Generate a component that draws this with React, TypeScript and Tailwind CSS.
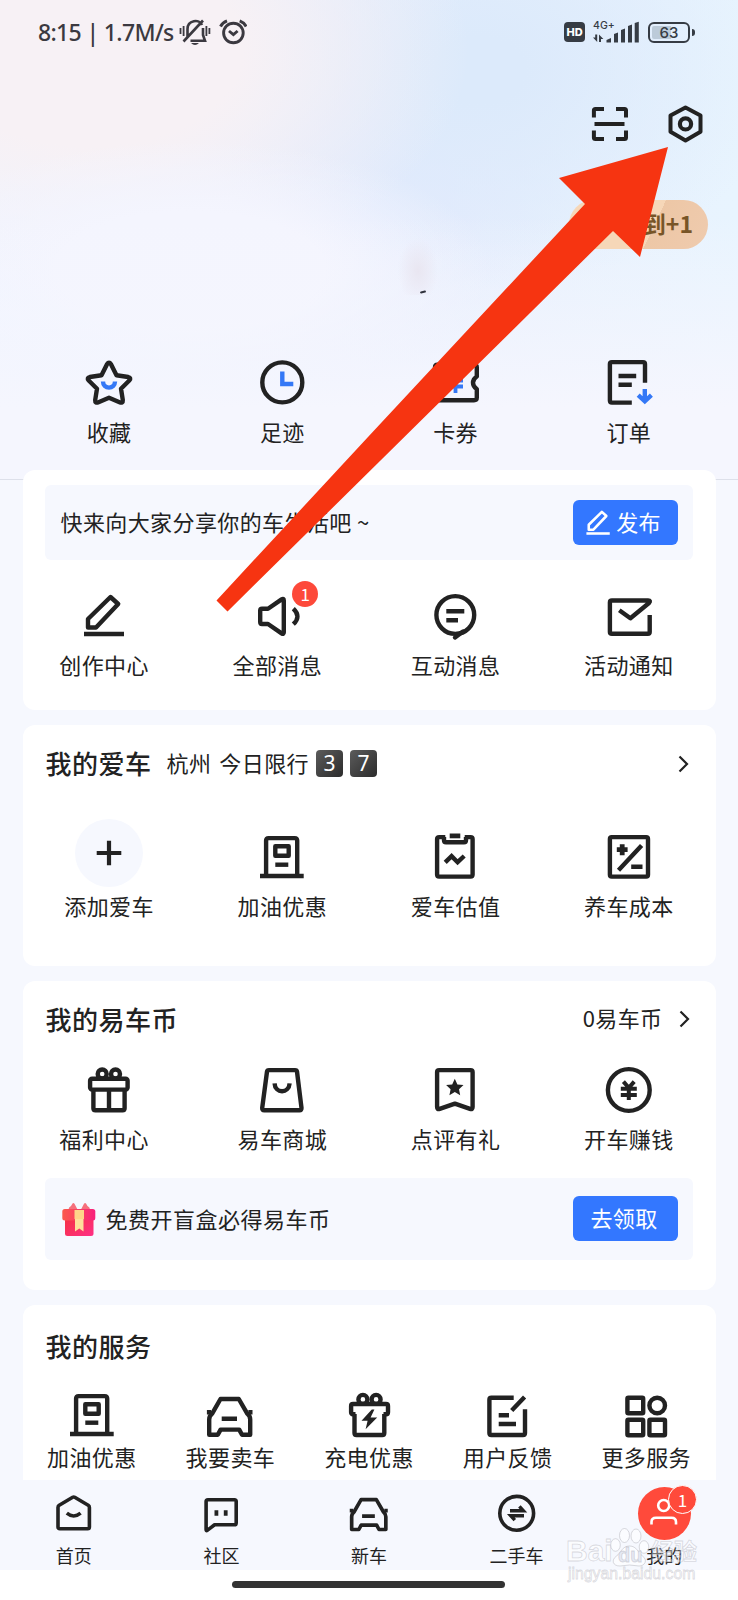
import type { ReactNode } from "react"
import clsx from "clsx"

type IconProps = { size?: number; className?: string }

function Svg({ size = 48, box = 48, sw = 4.4, className, children }: IconProps & { box?: number; sw?: number; children: ReactNode }) {
  return (
    <svg
      width={size}
      height={size}
      viewBox={`0 0 ${box} ${box}`}
      fill="none"
      stroke="currentColor"
      strokeWidth={sw}
      strokeLinejoin="round"
      className={clsx("shrink-0 overflow-visible", className)}
    >
      {children}
    </svg>
  )
}

const BLUE = "#3478f6"

const StarIcon = () => (
  <Svg>
    <path d="M16.5 16.3 22 5.2Q24 2.2 26 5.2L31.5 16.3 43.2 18Q46.6 19 44.3 21.5L36 29.7 37.8 41Q38 44.7 34.5 43.2L24 38.8 13.5 43.2Q10 44.7 10.2 41L12 29.7 3.7 21.5Q1.4 19 4.8 18Z" />
    <path d="M18 22.6a6 6 0 0 0 12 0" stroke={BLUE} />
  </Svg>
)

const ClockIcon = () => (
  <Svg>
    <circle cx="24.3" cy="23.4" r="20" />
    <path d="M24.3 12.5V25H35.3" stroke={BLUE} strokeLinejoin="miter" />
  </Svg>
)

const TicketIcon = () => (
  <Svg>
    <path d="M6.5 5.8H43Q45.8 5.8 45.8 8.5V17.5Q42 20 42 23.8T45.8 30V38.5Q45.8 41.2 43 41.2H6.5Q4 41.2 4 38.5V30Q7.8 27.5 7.8 23.8T4 17.5V8.5Q4 5.8 6.5 5.8Z" />
    <path d="M18 13 24.5 20 31 13M17 21.5H32M17 27.5H32M24.5 20V34" stroke={BLUE} strokeWidth="3.8" strokeLinejoin="miter" />
  </Svg>
)

const OrderIcon = () => (
  <Svg>
    <path d="M40 23.7V5.1Q40 3.1 38 3.1H6.9Q4.9 3.1 4.9 5.1V41.6Q4.9 43.6 6.9 43.6H26.8" />
    <path d="M13.5 17H31.2M13.5 25.7H26.8" />
    <path d="M39.8 30V42M33.2 36.2 39.8 42.3 46.4 36.2" stroke={BLUE} strokeLinejoin="miter" />
  </Svg>
)

const PencilIcon = ({ size, className }: IconProps) => (
  <Svg size={size} className={className}>
    <path d="M25.5 5 33.2 12 11 35.5H3V27Z" />
    <path d="M-1 42H39" />
  </Svg>
)

const SpeakerIcon = () => (
  <Svg>
    <path d="M4 16.8H10L23.6 7.4Q25.8 6 25.8 8.6V40.2Q25.8 42.8 23.6 41.4L10 32H4Q2.2 32 2.2 30V18.8Q2.2 16.8 4 16.8Z" />
    <path d="M35.3 16.6Q43.6 24.4 35.3 32.2" />
  </Svg>
)

const ChatIcon = () => (
  <Svg>
    <circle cx="24.3" cy="23" r="18.9" />
    <path d="M32 39.5 24 45.4" strokeLinecap="round" />
    <path d="M15.3 19.2H33.3M15.3 28.2H27" />
  </Svg>
)

const MailIcon = () => (
  <Svg>
    <path d="M44.7 23V40Q44.7 41.8 42.9 41.8H6.9Q4.9 41.8 4.9 39.9V10.4Q4.9 8.5 6.9 8.5H43Q46.2 8.6 44 11L25.4 26.3 14.3 18.2" />
  </Svg>
)

const PumpIcon = () => (
  <Svg>
    <path d="M2 43H45.7M8.1 43V7.6Q8.1 5.1 10.6 5.1H36.7Q39.2 5.1 39.2 7.6V43" />
    <rect x="17.3" y="13.3" width="13.4" height="9.4" />
    <path d="M17.3 31.7H30.3" />
  </Svg>
)

const ClipboardIcon = () => (
  <Svg>
    <path d="M14.3 4.1H8.1Q6.1 4.1 6.1 6.1V41.6Q6.1 43.6 8.1 43.6H39.6Q41.6 43.6 41.6 41.6V6.1Q41.6 4.1 39.6 4.1H33.7" />
    <path d="M13 4V7.2Q13 9.2 15 9.2H33Q35 9.2 35 7.2V4" />
    <path d="M18.7 2.9H29.3" strokeWidth="4.8" />
    <path d="M14.2 29.4 20.6 23.2 26.6 29.2 33.2 23" strokeLinejoin="miter" />
  </Svg>
)

const CostIcon = () => (
  <Svg>
    <rect x="4.9" y="4.1" width="38.1" height="39.5" rx="1.8" />
    <path d="M11.8 16.7H22.6M17.2 11.2V22.2" strokeWidth="4.8" />
    <path d="M13.5 37.2 36.6 12.6M26.2 33.7H37.5" />
  </Svg>
)

const GiftIcon = () => (
  <Svg>
    <rect x="5.1" y="12.8" width="37.5" height="10.8" rx="2" />
    <path d="M8.4 24V42.2Q8.4 44.2 10.4 44.2H37.6Q39.6 44.2 39.6 42.2V24M24 24V44" />
    <circle cx="17.2" cy="8" r="4.5" />
    <circle cx="30.5" cy="8" r="4.5" />
  </Svg>
)

const BagIcon = () => (
  <Svg>
    <path d="M11 4.1H37Q38.8 4.1 39 5.6L43.5 42Q43.7 44.2 41.5 44.2H6.2Q4 44.2 4.2 42L9 5.6Q9.2 4.1 11 4.1Z" />
    <path d="M16.6 17.3C17 27.8 31 27.8 31.6 17.3" />
  </Svg>
)

const BookmarkIcon = () => (
  <Svg>
    <path d="M8.1 4.1H39.6Q41.6 4.1 41.6 6.1V41Q41.6 43.8 39 42.9L23.9 37.6 8.7 42.9Q6.1 43.8 6.1 41V6.1Q6.1 4.1 8.1 4.1Z" />
    <path d="M23.8 12.8 26.4 18.4 32.5 19 28 23.2 29.2 29.2 23.8 26.1 18.4 29.2 19.6 23.2 15.1 19 21.2 18.4Z" fill="currentColor" stroke="none" />
  </Svg>
)

const YenIcon = () => (
  <Svg>
    <circle cx="23.8" cy="24" r="20.9" />
    <path d="M18.4 15.6 23.8 21.8 29.2 15.6M15.8 22.7H31.8M15.8 29H31.8M23.8 22V34" strokeWidth="4" strokeLinejoin="miter" />
  </Svg>
)

const CarIcon = ({ size }: IconProps) => (
  <Svg size={size}>
    <path d="M14.5 8H32.8L41.4 22.8Q44.2 25 44.2 28.5V43.8H36L33.2 38.6H14.6L11.8 43.8H3.2V28.5Q3.2 25 6 22.8Z" />
    <path d="M.9 21.2H5M42.4 21.2H46.5M15.7 27.7H31" />
  </Svg>
)

const ChargeIcon = () => (
  <Svg>
    <path d="M10.5 23.3H8Q6.1 23.3 6.1 21.3V15Q6.1 13 8 13H41Q43 13 43 15V21.3Q43 23.3 41 23.3H38.5" />
    <path d="M9.5 23V42Q9.5 44 11.5 44H37.3Q39.3 44 39.3 42V23" />
    <circle cx="17.9" cy="8.4" r="4.5" />
    <circle cx="31.1" cy="8.4" r="4.5" />
    <path d="M26.8 18.5 16.5 29.8H22.6L20.6 38.2 32.2 26.4H25.6L29.4 18.5Z" fill="currentColor" stroke="none" />
  </Svg>
)

const FeedbackIcon = () => (
  <Svg>
    <path d="M30.7 6.8H8.4Q6.4 6.8 6.4 8.8V42Q6.4 44 8.4 44H40Q42 44 42 42V18.3M28.7 19.6 41.6 6" />
    <path d="M15.7 24.3H26M15.7 33H33" />
  </Svg>
)

const MoreIcon = () => (
  <Svg>
    <rect x="5.4" y="6.8" width="15.8" height="15.4" rx="1" />
    <circle cx="35.2" cy="14.5" r="7.8" />
    <rect x="5.4" y="28.8" width="15.8" height="15.4" rx="1" />
    <rect x="27.4" y="28.8" width="15.6" height="15.4" rx="1" />
  </Svg>
)

const HomeTab = () => (
  <Svg size={40} box={40} sw={3.6}>
    <path d="M18.7 4.3Q19.7 3.7 20.7 4.3L34.2 12.2Q35.4 13 35.4 14.4V34Q35.4 35.8 33.6 35.8H5.8Q4 35.8 4 34V14.4Q4 13 5.2 12.2Z" />
    <path d="M12.8 20.2Q19.7 25.8 26.6 20.2" />
  </Svg>
)

const CommunityTab = () => (
  <Svg size={40} box={40} sw={3.6}>
    <path d="M7 6.8H33.4Q35.2 6.8 35.2 8.6V30Q35.2 31.8 33.4 31.8H13.6L6.2 37.4Q5.1 38 5.1 36.6V8.6Q5.1 6.8 7 6.8Z" />
    <path d="M15.4 17.2V22.8M24.7 17.2V22.8" strokeWidth="3.8" />
  </Svg>
)

const UsedCarTab = () => (
  <Svg size={40} box={40} sw={3.6}>
    <circle cx="19.7" cy="20.3" r="16.9" />
    <path d="M13 17.8H26.4L22.4 13.4M27 22.8H13.8L17.8 27.2" strokeWidth="3.4" strokeLinejoin="miter" />
  </Svg>
)

const PresentIcon = () => (
  <svg width="34" height="36" viewBox="0 0 34 36" className="shrink-0">
    <defs>
      <linearGradient id="lid" x1="0" x2="1">
        <stop offset="0" stopColor="#fb5a4c" />
        <stop offset="1" stopColor="#f8207c" />
      </linearGradient>
      <linearGradient id="box" x1="0" x2="1" y1="0" y2="1">
        <stop offset="0" stopColor="#f4323f" />
        <stop offset="1" stopColor="#ff2f86" />
      </linearGradient>
    </defs>
    <path d="M6.5 8.5Q6.5 6 9 5L10.5 2.5Q11.5 1.5 12.5 2.8L15.5 8.5ZM19 8.5 22 2.8Q23 1.5 24 2.5L25.5 5Q28 6 28 8.5Z" fill="#f5707c" />
    <rect x="3" y="15" width="28.5" height="20" rx="2.5" fill="url(#box)" />
    <rect x=".3" y="8" width="33" height="11.5" rx="2.5" fill="url(#lid)" />
    <path d="M12.5 9H22V18H12.5Z" fill="#ffd489" />
    <path d="M13 18H21.5V30.5L17.3 27.5 13 30.5Z" fill="#ffdf9c" />
  </svg>
)

const Chevron = () => (
  <svg width="11" height="18" viewBox="0 0 11 18" fill="none" stroke="#222" strokeWidth="2.2" className="shrink-0">
    <path d="M1.5 1.5 9 9 1.5 16.5" />
  </svg>
)

type Item = { icon: ReactNode; label: string; shift?: boolean; badge?: boolean }

const quick: Item[] = [
  { icon: <StarIcon />, label: "收藏" },
  { icon: <ClockIcon />, label: "足迹" },
  { icon: <TicketIcon />, label: "卡券" },
  { icon: <OrderIcon />, label: "订单" },
]

const messages: Item[] = [
  { icon: <PencilIcon />, label: "创作中心", shift: true },
  { icon: <SpeakerIcon />, label: "全部消息", shift: true, badge: true },
  { icon: <ChatIcon />, label: "互动消息" },
  { icon: <MailIcon />, label: "活动通知" },
]

const garage: Item[] = [
  {
    icon: (
      <div className="-mt-[14px] -mb-[6px] flex size-[68px] items-center justify-center rounded-full bg-[#f6f8fe]">
        <Svg size={26} box={26} sw={4.2}>
          <path d="M.7 13H25.3M13 .7V25.3" />
        </Svg>
      </div>
    ),
    label: "添加爱车",
  },
  { icon: <PumpIcon />, label: "加油优惠" },
  { icon: <ClipboardIcon />, label: "爱车估值" },
  { icon: <CostIcon />, label: "养车成本" },
]

const coins: Item[] = [
  { icon: <GiftIcon />, label: "福利中心", shift: true },
  { icon: <BagIcon />, label: "易车商城" },
  { icon: <BookmarkIcon />, label: "点评有礼" },
  { icon: <YenIcon />, label: "开车赚钱" },
]

const services: Item[] = [
  { icon: <PumpIcon />, label: "加油优惠" },
  { icon: <CarIcon />, label: "我要卖车" },
  { icon: <ChargeIcon />, label: "充电优惠" },
  { icon: <FeedbackIcon />, label: "用户反馈" },
  { icon: <MoreIcon />, label: "更多服务" },
]

const tabs: Item[] = [
  { icon: <HomeTab />, label: "首页" },
  { icon: <CommunityTab />, label: "社区" },
  { icon: <CarIcon size={40} />, label: "新车" },
  { icon: <UsedCarTab />, label: "二手车" },
]

function IconGrid({ items, className }: { items: Item[]; className?: string }) {
  return (
    <div className={clsx("grid", items.length === 5 ? "grid-cols-5" : "grid-cols-4", className)}>
      {items.map((item) => (
        <div key={item.label} className="flex flex-col items-center">
          <div className="relative mr-[0.5px] flex h-12 items-start justify-center">
            {item.icon}
            {item.badge && (
              <span className="absolute top-[-11px] left-[34px] flex size-[26px] items-center justify-center rounded-full bg-[#fd493a] pb-px text-[17px] leading-none text-white">
                1
              </span>
            )}
          </div>
          <span
            className={clsx(
              "text-[22px] leading-[30px] tracking-[0.4px]",
              items.length === 5 ? "mt-[2px]" : "mt-[9px]",
              item.shift && "mr-[10px]",
            )}
          >
            {item.label}
          </span>
        </div>
      ))}
    </div>
  )
}

function StatusBar() {
  return (
    <div className="flex h-16 items-center pr-[43.5px] pl-[38px] text-[#3b3940]">
      <span className="w-[140px] whitespace-nowrap font-['Noto_Sans'] text-[23px] leading-[30px] font-medium tracking-[-0.65px]">8:15 | 1.7M/s</span>
      <svg width="34" height="28" viewBox="0 0 34 28" fill="none" stroke="currentColor" strokeWidth="2.6">
        <path d="M2.5 10V16M5.6 8V18M28.4 8V18M31.4 10V16" strokeWidth="1.8" />
        <path d="M9.5 18.5V11C9.5 2 21.5 .5 24 7M25 10V17L27 22.8H12.5M25 2.5 5.5 23.5" />
        <path d="M13 25H21Q17 29 13 25Z" fill="currentColor" stroke="none" />
      </svg>
      <svg width="28" height="28" viewBox="0 0 28 28" fill="none" stroke="currentColor" strokeWidth="2.9" className="ml-[7px]">
        <circle cx="14.4" cy="15" r="9.8" />
        <path d="M1.5 8.5Q3.5 4.5 8 2.8M27.2 8.5Q25.2 4.5 20.7 2.8M10 13 14.4 16.6 18.6 13" />
      </svg>
      <div className="ml-auto flex items-center text-[#363c44]">
        <span className="flex h-5 w-[21px] items-center justify-center rounded bg-[#363c44] font-[Inter] text-[11px] font-extrabold text-white">HD</span>
        <div className="relative ml-2 h-6 w-[46px]">
          <span className="absolute top-px left-0 font-[Inter] text-[10.5px] leading-none font-medium">4G+</span>
          <svg width="46" height="24" viewBox="0 0 46 24" fill="currentColor">
            <path d="M13.5 22.5V20L18 18V22.5ZM21 22.5V14L25 12.5V22.5ZM28 22.5V10L32 8.5V22.5ZM35 22.5V6L39 4.5V22.5ZM41.7 22.5V3L45.8 1.8V22.5Z" />
            <path d="M4.2 14.5V22L0 17.5H2.2V14.5ZM6 22V14.5L10.4 19H8V22Z" />
          </svg>
        </div>
        <div className="ml-[9px] flex h-[21px] w-[42px] items-center justify-center rounded-md border-[2.4px] border-current bg-[linear-gradient(90deg,#bccbd9_55%,transparent_55%)] bg-clip-content p-[2px] font-[Inter] text-[15px] leading-none font-medium">
          63
        </div>
        <span className="ml-[2px] h-[7px] w-[2.5px] rounded-r-sm bg-[#363c44]" />
      </div>
    </div>
  )
}

function Watermark() {
  return (
    <div className="pointer-events-none absolute top-[1528px] left-[565px] h-[58px] w-[136px] font-['Liberation_Sans'] font-bold text-white/60 [-webkit-text-stroke:0.8px_rgba(165,165,175,0.4)]">
      <span className="absolute top-[8px] left-[1px] text-[30px] leading-[30px]">Bai</span>
      <svg width="46" height="46" viewBox="0 0 46 46" fill="#fff" fillOpacity=".6" stroke="#b4b4bc" strokeOpacity=".5" className="absolute -top-1 left-[43px]">
        <ellipse cx="7.5" cy="21" rx="4.8" ry="6.3" />
        <ellipse cx="16.5" cy="11.5" rx="5" ry="7" />
        <ellipse cx="28" cy="12" rx="5" ry="7" />
        <ellipse cx="36" cy="23" rx="4.8" ry="6.3" />
        <path d="M21.5 22C29 22 30 29 34.5 32C40 36 37 42 31 42Q21.5 40 12 42C4.5 42 3 36 8.5 32C13 29 14 22 21.5 22Z" />
      </svg>
      <span className="absolute top-[16px] left-[53px] text-[20px] leading-[22px] text-[#e6e9f3]">du</span>
      <span className="absolute top-[8px] left-[86px] font-['Noto_Sans_CJK_SC'] text-[23px] leading-[28px] text-white/40">经验</span>
      <span className="absolute top-[37px] left-[3px] text-[15.8px] leading-[18px] font-normal">jingyan.baidu.com</span>
    </div>
  )
}

export default function App() {
  return (
    <div className="relative flex h-[1600px] w-[738px] flex-col overflow-hidden bg-[#f6f8fe] font-['Noto_Sans_CJK_SC',sans-serif] text-[#222]">
      <div className="absolute inset-x-0 top-0 h-[480px] border-b border-[#dde0ea] bg-[linear-gradient(180deg,transparent_45%,#f5f6fe_85%),radial-gradient(ellipse_300px_130px_at_190px_270px,#f4f5fe_45%,transparent),radial-gradient(ellipse_380px_240px_at_90px_50px,#f7f1f5_40%,transparent),radial-gradient(ellipse_300px_220px_at_480px_70px,#dceafb_15%,transparent),radial-gradient(ellipse_170px_200px_at_400px_170px,#e4eafd,transparent),linear-gradient(90deg,#eef4ff,#e6edfd_45%,#e8f4fe)]" />

      <div className="relative flex h-[470px] flex-col">
        <StatusBar />
        <div className="mt-[36px] flex items-center justify-end gap-[34px] pr-[33px]">
          <Svg sw={4} className="-mr-[6px]">
            <path d="M8.9 17.5V10.5Q8.9 8.9 10.5 8.9H19M31 8.9H39.5Q41 8.9 41 10.5V17.5M8.9 30.5V37.5Q8.9 39.1 10.5 39.1H19M31 39.1H39.5Q41 39.1 41 37.5V30.5M9.5 24H39.5" />
          </Svg>
          <Svg sw={4} className="-mr-1">
            <path d="M24.5 7.4 39.5 15.5V31.8L24.5 40.4 9.5 31.8V15.5Z" />
            <circle cx="24.5" cy="23.9" r="5.6" strokeWidth="4.2" />
          </Svg>
        </div>
        <div className="mt-[52px] mr-[30px] ml-auto flex h-[49px] w-[139px] items-center justify-end rounded-full bg-[linear-gradient(115deg,#f6d7b8_60%,#edc7a6_60%,#efcbae)] pr-[15px] pb-[2px] text-[23px] font-bold text-[#785527]">
          签到+1
        </div>
        <div className="absolute top-[235px] left-[396px] h-[60px] w-[44px] bg-[radial-gradient(ellipse_at_50%_60%,#e9e6f1,transparent_65%)]" />
        <span className="absolute top-[291px] left-[420px] h-[2px] w-[6px] -rotate-12 rounded-full bg-[#2f323c]" />
        <IconGrid items={quick} className="mx-[22.5px] mt-[110px]" />
      </div>

      <section className="relative mx-[22.5px] h-[240px] shrink-0 rounded-xl bg-white pt-[15px]">
        <div className="mx-[22.5px] flex h-[75px] items-center justify-between rounded-md bg-[#f6f8fe] pr-[15px] pl-[15.5px]">
          <span className="-mt-[3px] text-[22px] tracking-[0.4px]">快来向大家分享你的车生活吧 ~</span>
          <button className="flex h-[45px] w-[105px] items-center justify-center rounded-md bg-[#3377ff] pr-[5px] pb-[2px] text-[22px] tracking-[0.3px] text-white">
            <PencilIcon size={28} className="mt-[2px] mr-px ml-[2px]" />
            发布
          </button>
        </div>
        <IconGrid items={messages} className="mt-8" />
      </section>

      <section className="relative mx-[22.5px] mt-[15px] h-[241px] shrink-0 rounded-xl bg-white pt-[19px]">
        <div className="flex h-10 items-center px-[22.5px]">
          <h2 className="-mt-[4px] ml-[0.5px] text-[26px] font-medium tracking-[0.5px]">我的爱车</h2>
          <span className="-mt-[3px] ml-[15px] text-[22px] tracking-[0.4px]">杭州</span>
          <span className="-mt-[3px] ml-[8px] text-[22px] tracking-[0.4px]">今日限行</span>
          <div className="-mt-[2px] ml-[7px] flex gap-[7px]">
            {["3", "7"].map((n) => (
              <span key={n} className="flex size-[27px] items-center justify-center rounded bg-gradient-to-br from-[#5c5c5c] to-[#2c2c2c] font-['Noto_Sans'] text-[21px] leading-none text-white">
                {n}
              </span>
            ))}
          </div>
          <div className="mr-[4px] ml-auto">
            <Chevron />
          </div>
        </div>
        <IconGrid items={garage} className="mt-[49px]" />
      </section>

      <section className="relative mx-[22.5px] mt-[15px] h-[309px] shrink-0 rounded-xl bg-white pt-[18px]">
        <div className="flex h-10 items-center px-[22.5px]">
          <h2 className="-mt-[2px] ml-[0.5px] text-[26px] font-medium tracking-[0.5px]">我的易车币</h2>
          <span className="-mt-[3px] mr-[16px] ml-auto text-[22px] tracking-[0.4px]">0易车币</span>
          <div className="-mt-px mr-[3.5px]">
            <Chevron />
          </div>
        </div>
        <IconGrid items={coins} className="mt-[27px]" />
        <div className="mx-[22.5px] mt-[24.5px] flex h-[82.5px] items-center rounded-md bg-[#f6f8fe] pr-[15px] pl-[17px]">
          <PresentIcon />
          <span className="-mt-px ml-[9.5px] text-[22px] tracking-[0.5px]">免费开盲盒必得易车币</span>
          <button className="ml-auto h-[45px] w-[105px] rounded-md bg-[#3377ff] pr-[3px] pb-[2px] text-[22px] tracking-[0.4px] text-white">去领取</button>
        </div>
      </section>

      <section className="relative mx-[22.5px] mt-[15px] h-[175px] shrink-0 rounded-t-xl bg-white pt-[21px]">
        <h2 className="ml-[23px] text-[26px] leading-10 font-medium tracking-[0.5px]">我的服务</h2>
        <IconGrid items={services} className="mt-[24.5px]" />
      </section>

      <nav className="relative grid h-[90px] shrink-0 grid-cols-5 bg-[#f6f8fe] pt-[13px] text-[18px] leading-6">
        {tabs.map((tab) => (
          <div key={tab.label} className="flex flex-col items-center gap-[10px]">
            {tab.icon}
            <span>{tab.label}</span>
          </div>
        ))}
        <div className="relative flex flex-col items-center">
          <div className="-mt-[6.5px] flex size-[53px] items-center justify-center rounded-full bg-[#ff4a3b] text-white">
            <Svg size={30} box={30} sw={2.6}>
              <circle cx="14.7" cy="7.5" r="5.5" />
              <path d="M2.5 26.500V24Q2.500 19.800 7 19.800H22.500Q27 19.800 27 24V26.500" />
            </Svg>
          </div>
          <span className="absolute -top-[8px] left-[77.5px] flex size-[29px] items-center justify-center rounded-full border border-white bg-[#ff4a3b] pb-px text-[17px] leading-none text-white">
            1
          </span>
          <span className="mt-[3.5px]">我的</span>
        </div>
      </nav>

      <div className="relative flex h-[30px] shrink-0 justify-center bg-white pt-[11px] pr-[2px]">
        <div className="h-[7px] w-[273px] rounded-full bg-[#333]" />
      </div>

      <Watermark />

      <svg width="738" height="1600" viewBox="0 0 738 1600" className="pointer-events-none absolute inset-0">
        <path d="M668 147 640 257 613 231 227.5 611.5 216.5 600.5 368 437 585 204 559 178Z" fill="#f63411" />
      </svg>
    </div>
  )
}
